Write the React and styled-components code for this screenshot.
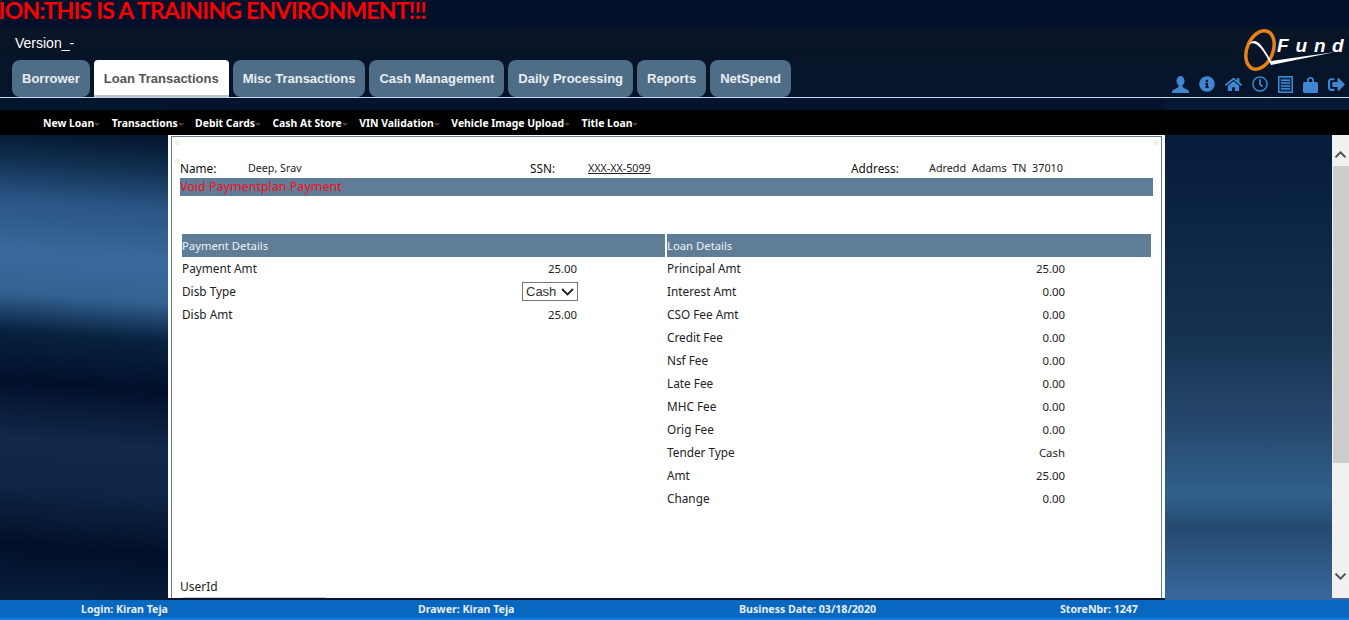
import React from "react";
import styled, { createGlobalStyle } from "styled-components";
import { FaInfoCircle, FaHome, FaRegClock, FaSignOutAlt, FaChevronUp, FaChevronDown } from "react-icons/fa";

const GlobalStyle = createGlobalStyle`
  html, body {
    margin: 0;
    height: 100%;
    overflow: hidden;
    background: #04142e;
  }
  * {
    box-sizing: border-box;
  }
`;

const tabs = ["Borrower", "Loan Transactions", "Misc Transactions", "Cash Management", "Daily Processing", "Reports", "NetSpend"];
const subMenu = ["New Loan", "Transactions", "Debit Cards", "Cash At Store", "VIN Validation", "Vehicle Image Upload", "Title Loan"];
const loanRows = [
  ["Principal Amt", "25.00"],
  ["Interest Amt", "0.00"],
  ["CSO Fee Amt", "0.00"],
  ["Credit Fee", "0.00"],
  ["Nsf Fee", "0.00"],
  ["Late Fee", "0.00"],
  ["MHC Fee", "0.00"],
  ["Orig Fee", "0.00"],
  ["Tender Type", "Cash"],
  ["Amt", "25.00"],
  ["Change", "0.00"],
];

const UserIcon = () => (
  <svg width="17" height="17" viewBox="0 0 17 17" fill="#3f87d0">
    <ellipse cx="8.5" cy="5" rx="4" ry="5" />
    <path d="M6.5 9.5h4l.5 2 5 2.5c.6.4 1 1.5 1 3H0c0-1.5.4-2.6 1-3l5-2.5z" />
  </svg>
);

const ListIcon = () => (
  <svg width="15" height="17" viewBox="0 0 15 17">
    <rect x="0" y="0" width="15" height="17" fill="#3f87d0" />
    <rect x="1.5" y="1.5" width="12" height="14" fill="#0a2a52" />
    <path d="M3 4.3h9M3 7.1h9M3 9.9h9M3 12.7h9" stroke="#3f87d0" strokeWidth="1.5" />
  </svg>
);

const LockIcon = () => (
  <svg width="15" height="17" viewBox="0 0 15 17" fill="#3f87d0">
    <path d="M4 6V4.2C4 2 5.5 1 7.5 1s3.5 1 3.5 3.2V6H9.3V4.4c0-1-.8-1.6-1.8-1.6s-1.8.6-1.8 1.600V6z" />
    <rect x="0" y="6" width="15" height="11" rx="1.5" />
  </svg>
);

const Logo = () => (
  <svg width="105" height="44" viewBox="0 0 105 44">
    <ellipse cx="16" cy="22" rx="13" ry="20" transform="rotate(22 16 22)" fill="none" stroke="#e8811a" strokeWidth="3.5" />
    <path d="M5 16C11 9 17 14 27 33L91 24L27 37C18 19 12 13 5 16Z" fill="#fff" />
    <text x="33 51.5 70 88" y="24" fill="#fff" fontFamily="'Liberation Sans', sans-serif" fontSize="19" fontStyle="italic" fontWeight="700">
      Fund
    </text>
  </svg>
);

export default function App() {
  return (
    <Page>
      <GlobalStyle />
      <Header>
        <Notice>ION:THIS IS A TRAINING ENVIRONMENT!!!</Notice>
        <VersionRow>
          <Version>Version_-</Version>
          <LogoBox>
            <Logo />
          </LogoBox>
        </VersionRow>
        <TabRow>
          <Tabs>
            {tabs.map((t) => (
              <Tab key={t} $active={t === "Loan Transactions"}>
                {t}
              </Tab>
            ))}
          </Tabs>
          <Icons>
            <UserIcon />
            <FaInfoCircle size={16} />
            <FaHome size={17} />
            <FaRegClock size={16} />
            <ListIcon />
            <LockIcon />
            <FaSignOutAlt size={17} />
          </Icons>
        </TabRow>
      </Header>
      <MenuBar>
        {subMenu.map((m) => (
          <MenuItem key={m}>{m}</MenuItem>
        ))}
      </MenuBar>
      <Body>
        <Viewport>
          <Panel>
            <PanelInner>
              <Dots>
                <Dot />
                <Dot />
              </Dots>
              <Spacer />
              <Dot />
              <InfoRow>
                <InfoLabel>Name:</InfoLabel>
                <InfoName>Deep, Srav</InfoName>
                <InfoLabel $w="58px">SSN:</InfoLabel>
                <InfoSsn>XXX-XX-5099</InfoSsn>
                <InfoLabel $w="78px">Address:</InfoLabel>
                <InfoValue>Adredd&nbsp; Adams&nbsp; TN&nbsp; 37010</InfoValue>
              </InfoRow>
              <TitleBar>Void Paymentplan Payment</TitleBar>
              <Columns>
                <section>
                  <ColumnHead>Payment Details</ColumnHead>
                  <Row $w={395}>
                    <Label>Payment Amt</Label>
                    <Value>25.00</Value>
                  </Row>
                  <Row $w={395}>
                    <Label>Disb Type</Label>
                    <Select defaultValue="Cash">
                      <option>Cash</option>
                    </Select>
                  </Row>
                  <Row $w={395}>
                    <Label>Disb Amt</Label>
                    <Value>25.00</Value>
                  </Row>
                </section>
                <section>
                  <ColumnHead>Loan Details</ColumnHead>
                  {loanRows.map(([label, value]) => (
                    <Row key={label} $w={398}>
                      <Label>{label}</Label>
                      <Value>{value}</Value>
                    </Row>
                  ))}
                </section>
              </Columns>
              <UserLabel>UserId</UserLabel>
              <UserInput />
            </PanelInner>
          </Panel>
        </Viewport>
        <ScrollBar>
          <ScrollButton $top>
            <FaChevronUp size={13} />
          </ScrollButton>
          <ScrollThumb />
          <ScrollTrack />
          <ScrollButton>
            <FaChevronDown size={13} />
          </ScrollButton>
        </ScrollBar>
      </Body>
      <Footer>
        <FooterCell $w="418px" $pad="81px">Login: Kiran Teja</FooterCell>
        <FooterCell $w="321px">Drawer: Kiran Teja</FooterCell>
        <FooterCell $w="321px">Business Date: 03/18/2020</FooterCell>
        <FooterCell>StoreNbr: 1247</FooterCell>
      </Footer>
    </Page>
  );
}

const Page = styled.div`
  width: 1349px;
  height: 620px;
  display: flex;
  flex-direction: column;
  overflow: hidden;
  font-family: "Noto Sans", "Open Sans", sans-serif;
  background:
    linear-gradient(184deg, #04112a 0, #04162f 22%, #103050 27%, #2a5484 33%, #3a6a9c 42%, #336292 48%, #082240 54%, #01102a 62%, #11284a 71%, #0e2444 79%, #011028 88%, #0a2444 100%) 0 0 / 168px 100% no-repeat,
    linear-gradient(180deg, #04112a 0, #061c3c 22%, #15304f 53%, #26496e 69%, #30608c 80%, #254a70 85%, #38669a 96%) 1165px 0 / 184px 100% no-repeat,
    #04142e;
`;

const Header = styled.header`
  height: 98px;
  flex: none;
  background: linear-gradient(180deg, #04102a 0, #03102a 27%, #0a1626 30%, #071428 60%, #06152c 100%);
  border-bottom: 1px solid #c9d8e8;
  position: relative;
`;

const Notice = styled.div`
  width: 426px;
  height: 28px;
  display: flex;
  justify-content: flex-end;
  color: #fa0000;
  font-family: Lato, "Noto Sans", sans-serif;
  font-size: 23px;
  font-weight: 700;
  letter-spacing: -0.75px;
  line-height: 20px;
  white-space: nowrap;
`;

const VersionRow = styled.div`
  height: 32px;
  display: flex;
  justify-content: space-between;
  padding-left: 15px;
`;

const Version = styled.div`
  font-family: "Liberation Sans", sans-serif;
  font-size: 14px;
  line-height: 30px;
  color: #fff;
`;

const LogoBox = styled.div`
  position: absolute;
  top: 28px;
  right: 0;
`;

const TabRow = styled.div`
  height: 37px;
  display: flex;
  justify-content: space-between;
  padding-left: 12px;
`;

const Tabs = styled.nav`
  display: flex;
  gap: 4px;
`;

const Tab = styled.div`
  height: 37px;
  padding: 0 10px;
  display: flex;
  align-items: center;
  border-radius: 8px;
  background: ${(p) => (p.$active ? "#fff" : "#4f6d87")};
  color: ${(p) => (p.$active ? "#555" : "#e9eef2")};
  font-family: "Liberation Sans", sans-serif;
  font-size: 13px;
  font-weight: 700;
  ${(p) => p.$active && "border-radius: 4px 4px 0 0; border-bottom: 2px solid #b9c4cf; padding-top: 2px;"}
`;

const Icons = styled.div`
  display: flex;
  align-items: center;
  gap: 10px;
  padding: 11px 4px 0 0;
  color: #3f87d0;
`;

const MenuBar = styled.nav`
  height: 25px;
  flex: none;
  margin-top: 12px;
  padding-left: 43px;
  display: flex;
  align-items: center;
  gap: 17.5px;
  background: #000;
`;

const MenuItem = styled.div`
  position: relative;
  color: #fff;
  font-size: 10.4px;
  font-weight: 700;
  &::after {
    content: "";
    position: absolute;
    right: -6px;
    top: 7px;
    border: 3px solid transparent;
    border-top: 3px solid #444;
  }
`;

const Body = styled.div`
  height: 463px;
  flex: none;
  display: flex;
`;

const Viewport = styled.main`
  flex: 1;
  overflow: hidden;
`;

const ScrollBar = styled.div`
  width: 17px;
  display: flex;
  flex-direction: column;
  background: #f1f1f1;
`;

const ScrollButton = styled.div`
  height: 31px;
  flex: none;
  display: flex;
  align-items: center;
  justify-content: center;
  padding: ${(p) => (p.$top ? "7px 0 0" : "0 0 13px")};
  color: #555;
`;

const ScrollThumb = styled.div`
  height: 297px;
  flex: none;
  margin-left: 1px;
  background: #cdcdcd;
`;

const ScrollTrack = styled.div`
  flex: 1;
`;

const Panel = styled.div`
  width: 997px;
  height: 625px;
  margin-left: 168px;
  padding: 1px 3px 0 3px;
  background: #fff;
`;

const PanelInner = styled.div`
  height: 100%;
  border: 1px solid #5f7d96;
  border-bottom: none;
  padding: 3px 8px 0 8px;
  color: #222;
  font-size: 12px;
`;

const Dots = styled.div`
  display: flex;
  justify-content: space-between;
  width: 978px;
`;

const Dot = styled.div`
  width: 5px;
  height: 5px;
  margin-left: -5px;
  background: #eff3e3;
`;

const Spacer = styled.div`
  height: 14px;
`;

const InfoRow = styled.div`
  display: flex;
  height: 14px;
  margin-top: -3px;
  align-items: center;
  line-height: 14px;
`;

const InfoLabel = styled.span`
  width: ${(p) => p.$w || "68px"};
  color: #111;
  font-size: 11.8px;
`;

const InfoName = styled.span`
  width: 282px;
  font-size: 10.7px;
`;

const InfoSsn = styled.span`
  width: 263px;
  font-size: 10.7px;
  text-decoration: underline;
`;

const InfoValue = styled.span`
  font-size: 10.8px;
`;

const TitleBar = styled.div`
  height: 18px;
  margin-top: 3px;
  width: 973px;
  background: #5f7d96;
  color: #f01020;
  font-size: 12.5px;
  line-height: 18px;
`;

const Columns = styled.div`
  display: grid;
  grid-template-columns: 483px 484px;
  gap: 2px;
  margin: 38px 0 0 2px;
`;

const ColumnHead = styled.div`
  height: 23px;
  background: #5f7d96;
  color: #eef2f5;
  font-size: 11.3px;
  line-height: 23px;
`;

const Row = styled.div`
  width: ${(p) => p.$w}px;
  height: 23px;
  display: flex;
  align-items: center;
  justify-content: space-between;
  color: #222;
`;

const Label = styled.span`
  margin-bottom: 2px;
  font-size: 11.8px;
`;

const Value = styled.span`
  font-size: 11.4px;
`;

const Select = styled.select`
  appearance: none;
  width: 56px;
  height: 19px;
  margin-right: -1px;
  padding: 0 0 0 3px;
  border: 1px solid #767676;
  border-radius: 0;
  background: #fff url("data:image/svg+xml,%3Csvg xmlns='http://www.w3.org/2000/svg' width='13' height='8'%3E%3Cpath d='M1 1L6.5 6.5L12 1' fill='none' stroke='%23222' stroke-width='1.8'/%3E%3C/svg%3E") no-repeat right 3px center;
  color: #333;
  font-family: "Liberation Sans", sans-serif;
  font-size: 13px;
`;

const UserLabel = styled.div`
  margin-top: 68px;
  font-size: 12px;
  color: #222;
`;

const UserInput = styled.input`
  display: block;
  width: 149px;
  height: 22px;
  margin-top: 2px;
  border: 1px solid #ccc;
  border-radius: 4px;
`;

const Footer = styled.footer`
  height: 20px;
  margin-top: 2px;
  flex: none;
  display: flex;
  align-items: center;
  background: #0868c0;
  border-bottom: 2px solid #0a80ee;
  color: #e8eef5;
  font-size: 10.6px;
  font-weight: 700;
`;

const FooterCell = styled.div`
  width: ${(p) => p.$w || "auto"};
  padding-left: ${(p) => p.$pad || "0"};
`;
